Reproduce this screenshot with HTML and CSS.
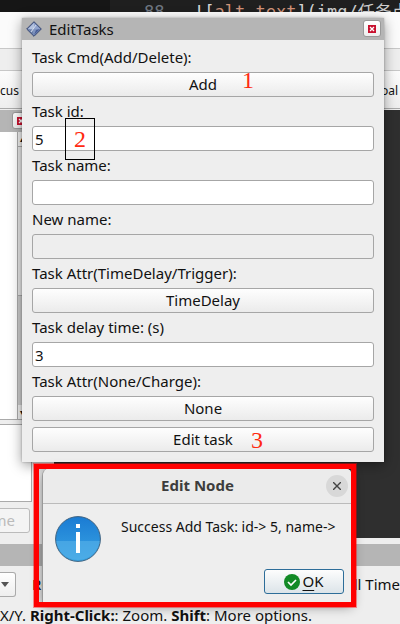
FILE: index.html
```html
<!DOCTYPE html>
<html lang="en">
<head>
<meta charset="utf-8">
<title>EditTasks</title>
<link rel="stylesheet" href="styles.css">
</head>
<body>
<div class="desktop">
  <div class="editor"><span class="line-no">88</span><code><b>![</b><i>alt text</i><b>](</b>img/任务点</code></div>
  <div class="menubar"></div>
  <div class="gapbar"></div>
  <div class="toolbar"><span>cus Camera</span><span>Goal</span></div>
  <main class="work">
    <aside class="side">
      <div class="dock-title"><button class="close" aria-label="Close panel"><svg viewBox="0 0 8 8"><rect width="8" height="8" fill="#c8102e"/><path d="M2 2l4 4M6 2L2 6" stroke="#fff" stroke-width="1.3"/></svg></button></div>
      <div class="tree"><div class="tree-body"></div><div class="scroll"><span class="arrow">▴</span><span class="thumb"></span><span class="track"></span><span class="arrow">▾</span></div></div>
      <div class="notes"></div>
      <div class="actions"><button class="rename" disabled>Rename</button></div>
    </aside>
    <div class="view"></div>
  </main>
  <div class="time-title"></div>
  <div class="time-row"><button class="combo" aria-label="Time options"><svg viewBox="0 0 8 5"><path d="M0 0h8L4 5z" fill="#555"/></svg></button><span>ROS Time</span><span class="wall">ll Time</span></div>
  <footer class="status">X/Y. <b>Right-Click:</b>: Zoom. <b>Shift</b>: More options.</footer>

  <section class="dialog">
    <header class="dialog-title">
      <svg class="gem" viewBox="0 0 16 16"><path d="M8 .7L15.3 8 8 15.3.7 8z" fill="#7f93bd" stroke="#33436f"/><path d="M8 2v6H2z" fill="#b3c2df"/><path d="M8 2l6 6H8z" fill="#8fa2cd"/><path d="M2 8l4 2 2 4z" fill="#60769f"/><path d="M8 14l2-5 4-1z" fill="#485e98"/><path d="M5 11l5-7" stroke="#d5ddec"/></svg>
      <span>EditTasks</span>
      <button class="close" aria-label="Close"><svg viewBox="0 0 8 8"><rect width="8" height="8" fill="#c8102e"/><path d="M2 2l4 4M6 2L2 6" stroke="#fff" stroke-width="1.3"/></svg></button>
    </header>
    <form class="form">
      <label for="cmd">Task Cmd(Add/Delete):</label>
      <button type="button" id="cmd" class="field">Add</button>
      <label for="tid">Task id:</label>
      <input id="tid" class="field" value="5">
      <label for="tname">Task name:</label>
      <input id="tname" class="field">
      <label for="nname">New name:</label>
      <input id="nname" class="field" disabled>
      <label for="attr">Task Attr(TimeDelay/Trigger):</label>
      <button type="button" id="attr" class="field">TimeDelay</button>
      <label for="delay">Task delay time: (s)</label>
      <input id="delay" class="field" value="3">
      <label for="charge">Task Attr(None/Charge):</label>
      <button type="button" id="charge" class="field">None</button>
      <button type="button" class="field">Edit task</button>
    </form>
    <span class="mark one">1</span>
    <span class="mark two">2</span>
    <span class="mark three">3</span>
  </section>

  <section class="message">
    <header class="message-title"><span>Edit Node</span><button class="round" aria-label="Close message"><svg viewBox="0 0 8 8"><path d="M0 0l8 8M8 0L0 8" stroke="#444" stroke-width="1.4"/></svg></button></header>
    <div class="message-body">
      <svg class="info" viewBox="0 0 46 46"><defs><linearGradient id="g" x2="0" y2="1"><stop stop-color="#1a7bd3"/><stop offset="1" stop-color="#3aa5e4"/></linearGradient></defs><circle cx="23" cy="23" r="22.4" fill="url(#g)" stroke="#3f627f"/><path d="M1.2 25h43.6a22 22 0 0 1-43.6 0z" fill="#58b2ea" opacity=".6"/><path d="M21 8h4v4h-4zM21 16h4v21h-4z" fill="#fff"/></svg>
      <p>Success Add Task: id-&gt; 5, name-&gt;</p>
    </div>
    <button class="ok"><svg viewBox="0 0 16 16"><circle cx="8" cy="8" r="8" fill="#128a26"/><path d="M4 8l3 3 5-5" fill="none" stroke="#fff" stroke-width="1.7"/></svg><span><u>O</u>K</span></button>
  </section>
  <div class="red-frame"></div>
</div>
</body>
</html>
```
FILE: styles.css
```css
* { box-sizing: border-box; }
body { margin: 0; font: 15px/17px "Noto Sans", sans-serif; color: #111; background: #eee; }
button, input { font: inherit; color: inherit; margin: 0; padding: 0; }
svg { display: block; }
.desktop { position: relative; display: flex; flex-direction: column; min-height: 100vh; overflow: hidden; }
.editor { display: flex; align-items: flex-start; height: 12px; overflow: hidden; background: linear-gradient(90deg, #161616 110px, #1f1f1f 110px); white-space: pre; color: #ccc; }
.editor .line-no, .editor code { font: 17px/24px "DejaVu Sans Mono", "Noto Sans CJK SC", monospace; }
.editor .line-no { width: 194px; padding-left: 144px; color: #6e7681; flex: none; }
.editor b { font-weight: normal; color: #d4d4d4; }
.editor i { font-style: normal; color: #ce9178; }
.menubar { height: 37px; background: #fbfbfb; border-bottom: 1px solid #c8c8c8; }
.gapbar { height: 22px; border-bottom: 1px solid #c8c8c8; }
.toolbar { display: flex; justify-content: space-between; align-items: center; height: 38px; padding: 2px 2px 0 0; font-size: 12px; background: linear-gradient(#fcfcfc, #eee); border-bottom: 1px solid #aaa; }
.work { flex: 1; display: flex; border-top: 1px solid #eee; }
.side { width: 54px; display: flex; flex-direction: column; }
.dock-title { height: 22px; padding: 2px 0 0 12px; background: #b5b5b5; }
.close { display: grid; place-items: center; width: 18px; height: 17px; border: 1px solid #999; border-radius: 3px; background: linear-gradient(#fff, #eee); }
.close svg { width: 8px; height: 8px; }
.tree { flex: 1; display: flex; border-bottom: 1px solid #aaa; }
.tree-body { width: 17px; background: #fff; }
.scroll { width: 20px; display: flex; flex-direction: column; border-left: 1px solid #aaa; background: #ccc; }
.arrow { height: 14px; padding-left: 2px; font-size: 8px; line-height: 14px; background: #eee; }
.thumb { height: 150px; background: #e6e6e6; border-top: 1px solid #aaa; border-bottom: 1px solid #aaa; }
.track { flex: 1; }
.notes { width: 32px; height: 78px; margin-top: 4px; background: #fff; border: solid #aaa; border-width: 1px 1px 1px 0; }
.actions { display: flex; justify-content: flex-end; width: 30px; height: 36px; padding-top: 6px; }
.rename { flex: none; width: 80px; height: 25px; padding-right: 14px; text-align: right; color: #bbb; border: 1px solid #bbb; border-radius: 3px; background: #f4f4f4; }
.view { flex: 1; background: #2f2f2f; }
.time-title { height: 22px; margin-top: 6px; background: #b5b5b5; }
.time-row { display: flex; align-items: center; gap: 16px; height: 36px; }
.combo { display: grid; place-items: center; width: 16px; height: 25px; padding-right: 6px; border: 1px solid #aaa; border-left: 0; border-radius: 0 3px 3px 0; background: linear-gradient(#fff, #eee); }
.combo svg { width: 8px; height: 5px; }
.wall { margin-left: auto; }
.status { height: 22px; padding-top: 5px; white-space: nowrap; }

.dialog { position: absolute; top: 18px; left: 22px; right: 16px; background: #eee; box-shadow: 0 3px 12px #0006, 0 0 2px #0004; }
.dialog-title { display: flex; align-items: center; gap: 7px; height: 22px; padding: 0 3px 0 4px; background: #b5b5b5; }
.dialog-title .close { margin: 0 0 1px auto; }
.gem { width: 16px; height: 16px; }
.form { display: flex; flex-direction: column; gap: 6px; padding: 9px 10px 10px; }
.field { width: 100%; height: 25px; border: 1px solid #a6a6a6; border-radius: 3px; background: #fff; }
button.field { background: linear-gradient(#fefefe, #ebebeb); }
input.field { padding: 0 2px; }
input.field:disabled { background: #eee; }
.mark { position: absolute; font: 24px/28px "Liberation Serif", serif; color: #ff2a10; }
.one { left: 220px; top: 48px; }
.two { left: 43px; top: 100px; width: 30px; height: 42px; border: 1px solid #000; text-align: center; line-height: 40px; }
.three { left: 229px; top: 408px; }

.message { position: absolute; top: 468px; left: 42px; right: 48px; height: 135px; display: flex; flex-direction: column; background: #eee; border-left: 1px solid #999; border-radius: 8px 8px 0 0; box-shadow: 0 3px 12px #0007; }
.message-title { flex: none; display: flex; align-items: center; height: 36px; padding: 0 4px 0 26px; border-bottom: 1px solid #bbb; border-radius: 8px 8px 0 0; background: #ebebeb; font-weight: bold; color: #3d3d3d; }
.message-title span { flex: 1; text-align: center; }
.round { display: grid; place-items: center; width: 22px; height: 22px; border: 0; border-radius: 50%; background: #d8d8d8; }
.round svg { width: 8px; height: 8px; }
.message-body { display: flex; gap: 20px; padding: 12px 12px 0; flex: 1; font-size: 14px; }
.message-body p { margin: 2px 0 0; white-space: nowrap; }
.info { width: 46px; height: 46px; flex: none; }
.ok { flex: none; align-self: flex-end; display: flex; align-items: center; justify-content: center; gap: 2px; width: 80px; height: 25px; margin: 0 8px 9px; border: 1px solid #2d6d99; border-radius: 3px; background: linear-gradient(#fdfdfd, #dce4e9); }
.ok svg { width: 16px; height: 16px; }
.ok u { text-underline-offset: 3px; }
.red-frame { position: absolute; top: 464px; left: 34px; right: 44px; height: 143px; border: 5px solid #f00; box-shadow: 0 0 0 1px #f006; pointer-events: none; }
```
